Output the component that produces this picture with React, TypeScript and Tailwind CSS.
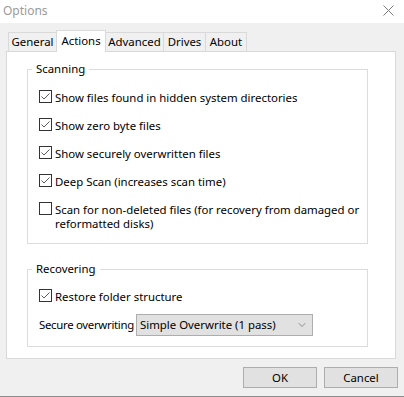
import { ChevronDown } from "lucide-react";

const font = { fontFamily: '"Noto Sans", "Open Sans", sans-serif' };

const Check = ({ checked }: { checked: boolean }) => (
  <span className="w-[13px] h-[13px] shrink-0 border border-[#333333] bg-white flex">
    {checked && (
      <svg width="11" height="11" viewBox="0 0 11 11">
        <path d="M1.5 5.5 L4 8 L9.5 2.5" fill="none" stroke="#5a5a5a" strokeWidth="1" />
      </svg>
    )}
  </span>
);

const Row = ({ checked, children }: { checked: boolean; children: React.ReactNode }) => (
  <div className="flex items-start gap-[3px] leading-[13px] whitespace-nowrap">
    <Check checked={checked} />
    <span className="pt-px">{children}</span>
  </div>
);

const tabs = ["General", "Actions", "Advanced", "Drives", "About"];
const tabWidth: Record<string, string> = {
  General: "w-[49px]",
  Actions: "w-[50px]",
  Advanced: "w-[59px]",
  Drives: "w-[43px]",
  About: "w-[42px]",
};

export default function App() {
  return (
    <div
      className="w-[404px] h-[397px] bg-[#f0f0f0] border-b border-[#8c8c8c] flex flex-col text-[11.4px] text-black"
      style={font}
    >
      {/* title bar */}
      <div className="h-[23px] bg-white flex items-center justify-between pl-[3px] pr-[10px] shrink-0">
        <span className="text-[#9a9a9a] text-[12px] -mt-[2px]">Options</span>
        <svg width="11" height="11" viewBox="0 0 11 11" className="-mt-[3px]">
          <path d="M0.5 0.5 L10.5 10.5 M10.5 0.5 L0.5 10.5" stroke="#7a7a7a" strokeWidth="1" />
        </svg>
      </div>

      {/* tabs */}
      <div className="mt-[7px] h-[21px] flex items-end pl-[8px]">
        {tabs.map((t, i) => {
          const active = t === "Actions";
          return (
            <div
              key={t}
              className={`${tabWidth[t]} ${i > 0 ? "-ml-px" : ""} border border-b-0 border-[#d9d9d9] flex items-center justify-center ${
                active ? "h-[22px] -mb-px bg-white relative z-10 pb-[2px]" : "h-[19px] bg-[#f0f0f0]"
              }`}
            >
              {t}
            </div>
          );
        })}
      </div>

      {/* panel */}
      <div className="mx-[6px] w-[390px] h-[308px] bg-white border border-[#d9d9d9] flex flex-col pl-[20px]">
        <fieldset className="mt-[9px] w-[341px] border border-[#dcdcdc] pb-[12px]">
          <legend className="ml-[4px] px-[4px] leading-[16px]">Scanning</legend>
          <div className="flex flex-col pl-[11px] pt-[13px] gap-[14px]">
            <Row checked>Show files found in hidden system directories</Row>
            <Row checked>Show zero byte files</Row>
            <Row checked>Show securely overwritten files</Row>
            <Row checked>Deep Scan (increases scan time)</Row>
            <Row checked={false}>
              <span className="leading-[14px] block">
                Scan for non-deleted files (for recovery from damaged or
                <br />
                reformatted disks)
              </span>
            </Row>
          </div>
        </fieldset>

        <fieldset className="mt-[17px] w-[341px] border border-[#dcdcdc] pb-[10px]">
          <legend className="ml-[4px] px-[4px] leading-[16px]">Recovering</legend>
          <div className="flex flex-col pl-[11px] pt-[12px] gap-[11px]">
            <Row checked>Restore folder structure</Row>
            <div className="flex items-center gap-[3px]">
              <span className="w-[94px] shrink-0 whitespace-nowrap tracking-[-0.3px]">Secure overwriting</span>
              <div className="w-[177px] h-[22px] bg-[#e1e1e1] border border-[#adadad] flex items-center justify-between pl-[3px] pr-[4px] whitespace-nowrap">
                <span>Simple Overwrite (1 pass)</span>
                <ChevronDown size={12} strokeWidth={1.2} color="#555" />
              </div>
            </div>
          </div>
        </fieldset>
      </div>

      {/* buttons */}
      <div className="mt-[8px] flex justify-end gap-[7px] pr-[6px]">
        <button className="w-[74px] h-[21px] bg-[#e1e1e1] border border-[#adadad]">OK</button>
        <button className="w-[74px] h-[21px] bg-[#e1e1e1] border border-[#adadad]">Cancel</button>
      </div>
    </div>
  );
}
